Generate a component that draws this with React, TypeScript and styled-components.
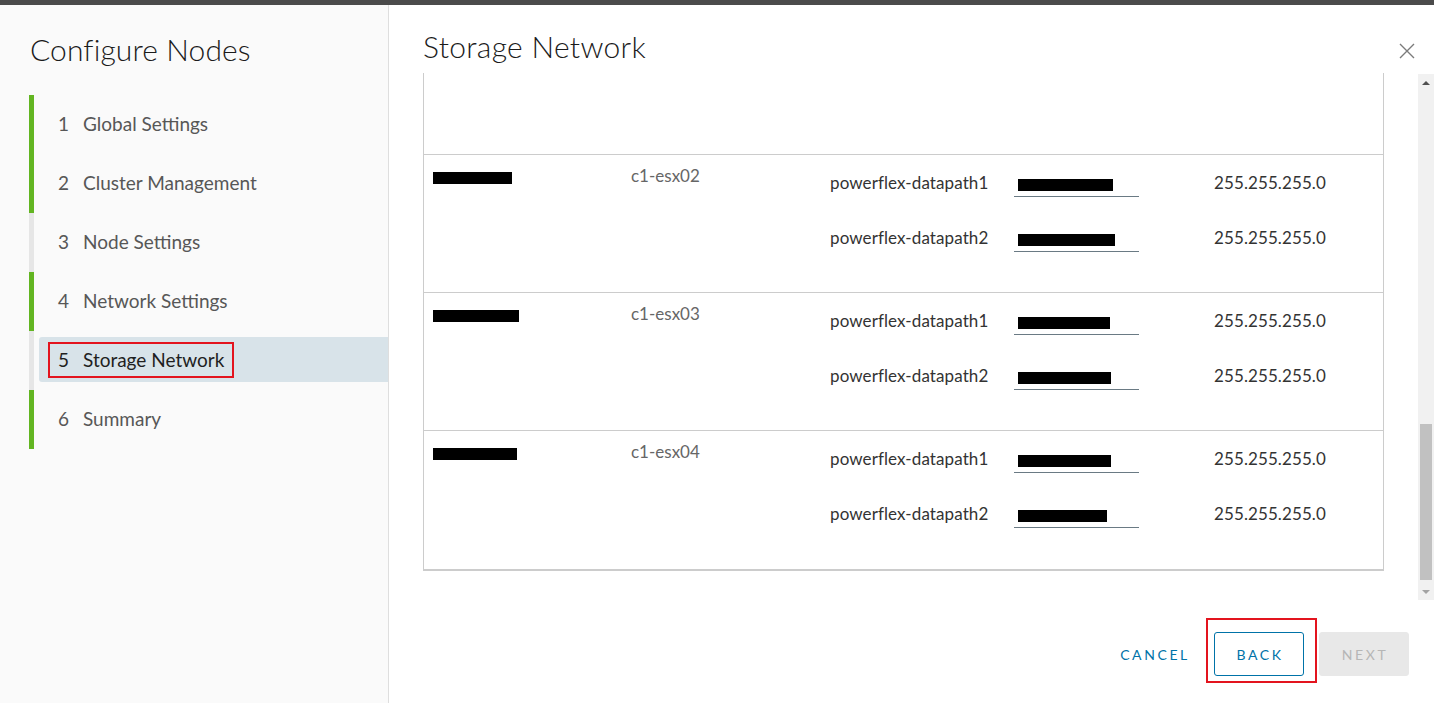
import React from 'react';
import styled, { createGlobalStyle } from 'styled-components';

const GlobalStyle = createGlobalStyle`
  html, body {
    margin: 0;
    padding: 0;
    background: #ffffff;
    font-family: Lato, "Open Sans", Arial, sans-serif;
    overflow: hidden;
  }
`;

const TopBar = styled.div`
  height: 5px;
  background: #4b4b4b;
`;

const Shell = styled.div`
  display: flex;
  height: 698px;
`;

const Sidebar = styled.aside`
  width: 359px;
  flex-shrink: 0;
  background: #fafafa;
  border-right: 1px solid #dedede;
  padding-left: 29px;
`;

const SideTitle = styled.h1`
  margin: 28px 0 30px 1px;
  font-size: 30px;
  line-height: 32px;
  font-weight: 300;
  letter-spacing: 0.1px;
  color: #1b1b1b;
`;

const StepList = styled.ol`
  list-style: none;
  margin: 0;
  padding: 0;
`;

const Step = styled.li<{ $done: boolean }>`
  height: 59px;
  display: flex;
  align-items: center;
  border-left: 5px solid ${(p) => (p.$done ? '#62b521' : '#e6e6e6')};
`;

const StepBody = styled.div<{ $active: boolean }>`
  flex: 1;
  margin: -2px 0 0 5px;
  height: 45px;
  display: flex;
  align-items: center;
  padding-left: 9px;
  border-radius: 3px 0 0 3px;
  background: ${(p) => (p.$active ? '#d8e3e9' : 'transparent')};
`;

const StepLabel = styled.span<{ $active: boolean }>`
  display: inline-flex;
  align-items: center;
  height: 32px;
  padding: 0 8px;
  border: 2px solid ${(p) => (p.$active ? '#e3141e' : 'transparent')};
  font-size: 19px;
  color: ${(p) => (p.$active ? '#1f1f1f' : '#575757')};
`;

const StepNum = styled.span`
  width: 25px;
`;

const Main = styled.main`
  flex: 1;
  display: flex;
  flex-direction: column;
  min-width: 0;
`;

const Header = styled.header`
  height: 68px;
  display: flex;
  align-items: flex-start;
  justify-content: space-between;
  padding: 0 19px 0 34px;
  box-sizing: border-box;
`;

const Title = styled.h2`
  margin: 25px 0 0;
  font-size: 30px;
  line-height: 32px;
  font-weight: 300;
  letter-spacing: 0.3px;
  color: #1b1b1b;
`;

const CloseButton = styled.button`
  margin-top: 38px;
  padding: 0;
  border: none;
  background: none;
  width: 16px;
  height: 16px;
  display: flex;
`;

const Body = styled.div`
  height: 527px;
  display: flex;
`;

const Content = styled.div`
  flex: 1;
  padding: 0 34px;
`;

const Table = styled.div`
  border-left: 1px solid #cccccc;
  border-right: 1px solid #cccccc;
  border-bottom: 2px solid #cccccc;
`;

const SpacerRow = styled.div`
  height: 81px;
  border-bottom: 1px solid #cccccc;
`;

const Row = styled.div<{ $last?: boolean }>`
  height: 138px;
  display: grid;
  grid-template-columns: 198px 199px 1fr;
  padding-left: 9px;
  border-bottom: ${(p) => (p.$last ? 'none' : '1px solid #cccccc')};
  box-sizing: border-box;
  text-align: left;
`;

const Cell = styled.div`
  padding-top: 11px;
  font-size: 17px;
  line-height: 20px;
  color: #666666;
`;

const Redacted = styled.span<{ $w: number }>`
  display: inline-block;
  width: ${(p) => p.$w}px;
  height: 12px;
  background: #000000;
`;

const HostCell = styled.div`
  padding-top: 13px;
`;

const Paths = styled.div`
  padding-top: 18px;
`;

const PathLine = styled.div`
  height: 55px;
  display: grid;
  grid-template-columns: 184px 200px 1fr;
  align-items: start;
  font-size: 17px;
  line-height: 20px;
  letter-spacing: 0.1px;
  color: #333333;
`;

const IpField = styled.div`
  width: 125px;
  height: 26px;
  margin-top: -2px;
  box-sizing: border-box;
  border-bottom: 1px solid #6a7a84;
  padding: 4px 0 0 4px;
`;

const Scrollbar = styled.div`
  width: 16px;
  display: flex;
  flex-direction: column;
  background: #f1f1f1;
  margin-top: 1px;
`;

const Arrow = styled.div<{ $up?: boolean }>`
  height: 17px;
  display: flex;
  align-items: center;
  justify-content: center;
  &::before {
    content: '';
    border-left: 4px solid transparent;
    border-right: 4px solid transparent;
    ${(p) => (p.$up ? 'border-bottom: 4px solid #505050;' : 'border-top: 4px solid #a3a3a3;')}
  }
`;

const Track = styled.div`
  flex: 1;
  padding: 0 2px;
`;

const Thumb = styled.div`
  margin-top: 333px;
  height: 156px;
  background: #c1c1c1;
`;

const Footer = styled.footer`
  flex: 1;
  display: flex;
  justify-content: flex-end;
  align-items: flex-start;
  gap: 15px;
  padding: 32px 25px 0 0;
`;

const Button = styled.button<{ $kind: 'flat' | 'outline' | 'disabled' }>`
  width: 90px;
  height: 44px;
  border-radius: 3px;
  font-family: Lato, "Open Sans", Arial, sans-serif;
  font-size: 14px;
  letter-spacing: 2.6px;
  padding: 0 0 0 2px;
  background: ${(p) => (p.$kind === 'disabled' ? '#e8e8e8' : '#ffffff')};
  color: ${(p) => (p.$kind === 'disabled' ? '#b6b6b6' : '#0073a8')};
  border: 1px solid ${(p) => (p.$kind === 'outline' ? '#0073a8' : p.$kind === 'disabled' ? '#e8e8e8' : 'transparent')};
`;

const Marked = styled.span`
  position: relative;
  display: inline-flex;
  &::after {
    content: '';
    position: absolute;
    top: -14px;
    left: -8px;
    right: -13px;
    bottom: -7px;
    border: 2px solid #e3141e;
  }
`;

const steps = [
  { n: 1, label: 'Global Settings', done: true },
  { n: 2, label: 'Cluster Management', done: true },
  { n: 3, label: 'Node Settings', done: false },
  { n: 4, label: 'Network Settings', done: true },
  { n: 5, label: 'Storage Network', done: false, active: true },
  { n: 6, label: 'Summary', done: true },
];

const hosts = [
  { name: 'c1-esx02', host: 79, ips: [95, 97] },
  { name: 'c1-esx03', host: 86, ips: [92, 93] },
  { name: 'c1-esx04', host: 84, ips: [93, 89] },
];

const App: React.FC = () => {
  return (
    <>
      <GlobalStyle />
      <TopBar />
      <Shell>
        <Sidebar>
          <SideTitle>Configure Nodes</SideTitle>
          <StepList>
            {steps.map((s) => (
              <Step key={s.n} $done={s.done}>
                <StepBody $active={!!s.active}>
                  <StepLabel $active={!!s.active}>
                    <StepNum>{s.n}</StepNum>
                    {s.label}
                  </StepLabel>
                </StepBody>
              </Step>
            ))}
          </StepList>
        </Sidebar>
        <Main>
          <Header>
            <Title>Storage Network</Title>
            <CloseButton aria-label="Close">
              <svg width="16" height="16" viewBox="0 0 16 16">
                <path d="M1 1 L15 15 M15 1 L1 15" stroke="#7b7b7b" strokeWidth="1.4" fill="none" />
              </svg>
            </CloseButton>
          </Header>
          <Body>
            <Content>
              <Table>
                <SpacerRow />
                {hosts.map((h, i) => (
                  <Row key={h.name} $last={i === hosts.length - 1}>
                    <HostCell>
                      <Redacted $w={h.host} />
                    </HostCell>
                    <Cell>{h.name}</Cell>
                    <Paths>
                      {h.ips.map((w, j) => (
                        <PathLine key={j}>
                          <span>powerflex-datapath{j + 1}</span>
                          <IpField>
                            <Redacted $w={w} />
                          </IpField>
                          <span>255.255.255.0</span>
                        </PathLine>
                      ))}
                    </Paths>
                  </Row>
                ))}
              </Table>
            </Content>
            <Scrollbar>
              <Arrow $up />
              <Track>
                <Thumb />
              </Track>
              <Arrow />
            </Scrollbar>
          </Body>
          <Footer>
            <Button $kind="flat">CANCEL</Button>
            <Marked>
              <Button $kind="outline">BACK</Button>
            </Marked>
            <Button $kind="disabled">NEXT</Button>
          </Footer>
        </Main>
      </Shell>
    </>
  );
};

export default App;
